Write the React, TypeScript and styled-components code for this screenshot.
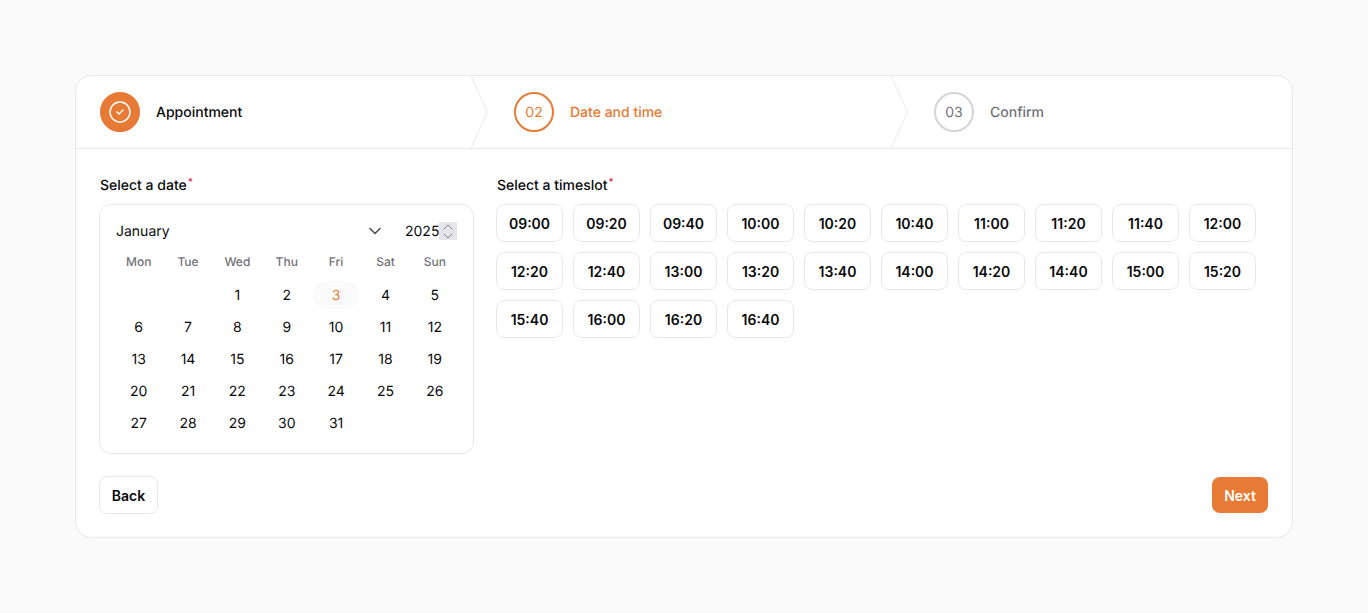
import React from 'react';
import styled, {createGlobalStyle} from 'styled-components';
import {ChevronDown, ChevronUp, CircleCheck} from 'lucide-react';

const ORANGE = '#e77a34';
const LINE = '#e8e8ea';

const GlobalStyle = createGlobalStyle`
    html, body {
        margin: 0;
        padding: 0;
        background: #fafafa;
        font-family: Inter, 'Liberation Sans', sans-serif;
        color: #09090b;
        text-rendering: geometricPrecision;
    }
`;

const Page = styled.div`
    box-sizing: border-box;
    width: 1368px;
    height: 613px;
    padding: 75px;
`;

const Card = styled.div`
    box-sizing: border-box;
    width: 1218px;
    height: 463px;
    background: #fff;
    border: 1px solid ${LINE};
    border-radius: 16px;
    overflow: hidden;
`;

const Steps = styled.div`
    display: flex;
    height: 72px;
    border-bottom: 1px solid ${LINE};
`;

const Step = styled.div<{$width: number; $first?: boolean}>`
    position: relative;
    box-sizing: border-box;
    flex: 0 0 ${(p) => p.$width}px;
    display: flex;
    align-items: center;
    gap: 16px;
    padding-left: ${(p) => (p.$first ? 24 : 43)}px;
`;

const Arrow = styled.svg`
    position: absolute;
    top: 0;
    right: -18px;
    width: 18px;
    height: 72px;
    fill: none;
    stroke: ${LINE};
    stroke-width: 1;
`;

type StepState = 'done' | 'active' | 'todo';

const Bubble = styled.div<{$state: StepState}>`
    box-sizing: border-box;
    width: 40px;
    height: 40px;
    border-radius: 50%;
    display: flex;
    align-items: center;
    justify-content: center;
    font-size: 14px;
    font-weight: 400;
    background: ${(p) => (p.$state === 'done' ? ORANGE : '#fff')};
    color: ${(p) => (p.$state === 'active' ? ORANGE : p.$state === 'todo' ? '#71717a' : '#fff')};
    border: 2px solid ${(p) => (p.$state === 'active' ? ORANGE : p.$state === 'todo' ? '#d4d4d8' : ORANGE)};
`;

const StepLabel = styled.span<{$state: StepState}>`
    font-size: 14px;
    line-height: 20px;
    font-weight: 500;
    padding-top: 2px;
    color: ${(p) => (p.$state === 'active' ? ORANGE : p.$state === 'todo' ? '#71717a' : '#09090b')};
`;

const Body = styled.div`
    padding: 27px 24px 0 23px;
`;

const Columns = styled.div`
    display: flex;
    gap: 22px;
`;

const DateColumn = styled.div`
    flex: 0 0 375px;
`;

const TimeColumn = styled.div`
    flex: 1;
`;

const FieldLabel = styled.div`
    font-size: 14px;
    line-height: 20px;
    font-weight: 500;
    height: 20px;
    margin: 0 0 8px 1px;
    sup {
        color: #d9264a;
        font-size: 10px;
        line-height: 0;
        margin-left: 1px;
        vertical-align: 5px;
    }
`;

const Calendar = styled.div`
    box-sizing: border-box;
    height: 250px;
    border: 1px solid ${LINE};
    border-radius: 12px;
    padding: 17px 13px 0 14px;
`;

const CalendarHead = styled.div`
    display: flex;
    align-items: center;
    height: 18px;
    margin: 0 3px 14px 0;
`;

const MonthName = styled.span`
    flex: 1;
    font-size: 14px;
    padding-left: 2px;
`;

const MonthCaret = styled(ChevronDown)`
    color: #52525b;
    margin-right: 20px;
`;

const Year = styled.span`
    font-size: 14px;
    width: 34px;
`;

const Spinner = styled.div`
    width: 18px;
    height: 18px;
    background: #e4e4e9;
    display: flex;
    flex-direction: column;
    align-items: center;
    justify-content: center;
    color: #85858d;
    svg {
        flex: none;
        margin: -3.5px 0;
    }
`;

const DayGrid = styled.div`
    display: grid;
    grid-template-columns: repeat(7, 1fr);
    grid-template-rows: 25px;
    grid-auto-rows: 32px;
    width: 345.5px;
`;

const WeekDay = styled.div`
    font-size: 12px;
    font-weight: 500;
    line-height: 16px;
    text-align: center;
    color: #71717a;
`;

const Day = styled.div<{$today?: boolean}>`
    justify-self: center;
    align-self: center;
    width: 46px;
    height: 28px;
    border-radius: 14px;
    display: flex;
    align-items: center;
    justify-content: center;
    font-size: 14px;
    color: ${(p) => (p.$today ? ORANGE : '#09090b')};
    background: ${(p) => (p.$today ? '#fafafa' : 'transparent')};
`;

const Slots = styled.div`
    display: grid;
    grid-template-columns: repeat(10, 67px);
    gap: 10px;
`;

const Slot = styled.button`
    box-sizing: border-box;
    height: 38px;
    padding: 0;
    background: #fff;
    border: 1px solid ${LINE};
    border-radius: 8px;
    font-family: inherit;
    font-size: 14px;
    font-weight: 600;
    color: #09090b;
`;

const Footer = styled.div`
    display: flex;
    align-items: center;
    justify-content: space-between;
    margin-top: 22px;
`;

const BackButton = styled.button`
    box-sizing: border-box;
    width: 59px;
    height: 38px;
    padding: 0;
    background: #fff;
    border: 1px solid ${LINE};
    border-radius: 8px;
    font-family: inherit;
    font-size: 14px;
    font-weight: 600;
    color: #09090b;
`;

const NextButton = styled.button`
    box-sizing: border-box;
    width: 56px;
    height: 36px;
    padding: 0;
    background: ${ORANGE};
    border: 0;
    border-radius: 8px;
    font-family: inherit;
    font-size: 14px;
    font-weight: 600;
    color: #fff;
`;

const weekDays = ['Mon', 'Tue', 'Wed', 'Thu', 'Fri', 'Sat', 'Sun'];
const days = Array.from({length: 31}, (_, i) => i + 1);
const slots = [
    '09:00', '09:20', '09:40', '10:00', '10:20', '10:40', '11:00', '11:20', '11:40', '12:00',
    '12:20', '12:40', '13:00', '13:20', '13:40', '14:00', '14:20', '14:40', '15:00', '15:20',
    '15:40', '16:00', '16:20', '16:40'
];

function StepArrow() {
    return (
        <Arrow viewBox="0 0 18 72">
            <path d="M0 0 L16.5 36 L0 72" />
        </Arrow>
    );
}

export default function App() {
    return (
        <Page>
            <GlobalStyle />
            <Card>
                <Steps>
                    <Step $width={395} $first>
                        <Bubble $state="done">
                            <CircleCheck size={24} strokeWidth={1.5} />
                        </Bubble>
                        <StepLabel $state="done">Appointment</StepLabel>
                        <StepArrow />
                    </Step>
                    <Step $width={420}>
                        <Bubble $state="active">02</Bubble>
                        <StepLabel $state="active">Date and time</StepLabel>
                        <StepArrow />
                    </Step>
                    <Step $width={401}>
                        <Bubble $state="todo">03</Bubble>
                        <StepLabel $state="todo">Confirm</StepLabel>
                    </Step>
                </Steps>
                <Body>
                    <Columns>
                        <DateColumn>
                            <FieldLabel>
                                Select a date<sup>*</sup>
                            </FieldLabel>
                            <Calendar>
                                <CalendarHead>
                                    <MonthName>January</MonthName>
                                    <MonthCaret size={20} />
                                    <Year>2025</Year>
                                    <Spinner>
                                        <ChevronUp size={16} strokeWidth={1.5} />
                                        <ChevronDown size={16} strokeWidth={1.5} />
                                    </Spinner>
                                </CalendarHead>
                                <DayGrid>
                                    {weekDays.map((d) => (
                                        <WeekDay key={d}>{d}</WeekDay>
                                    ))}
                                    <span />
                                    <span />
                                    {days.map((d) => (
                                        <Day key={d} $today={d === 3}>
                                            {d}
                                        </Day>
                                    ))}
                                </DayGrid>
                            </Calendar>
                        </DateColumn>
                        <TimeColumn>
                            <FieldLabel>
                                Select a timeslot<sup>*</sup>
                            </FieldLabel>
                            <Slots>
                                {slots.map((s) => (
                                    <Slot key={s}>{s}</Slot>
                                ))}
                            </Slots>
                        </TimeColumn>
                    </Columns>
                    <Footer>
                        <BackButton>Back</BackButton>
                        <NextButton>Next</NextButton>
                    </Footer>
                </Body>
            </Card>
        </Page>
    );
}
